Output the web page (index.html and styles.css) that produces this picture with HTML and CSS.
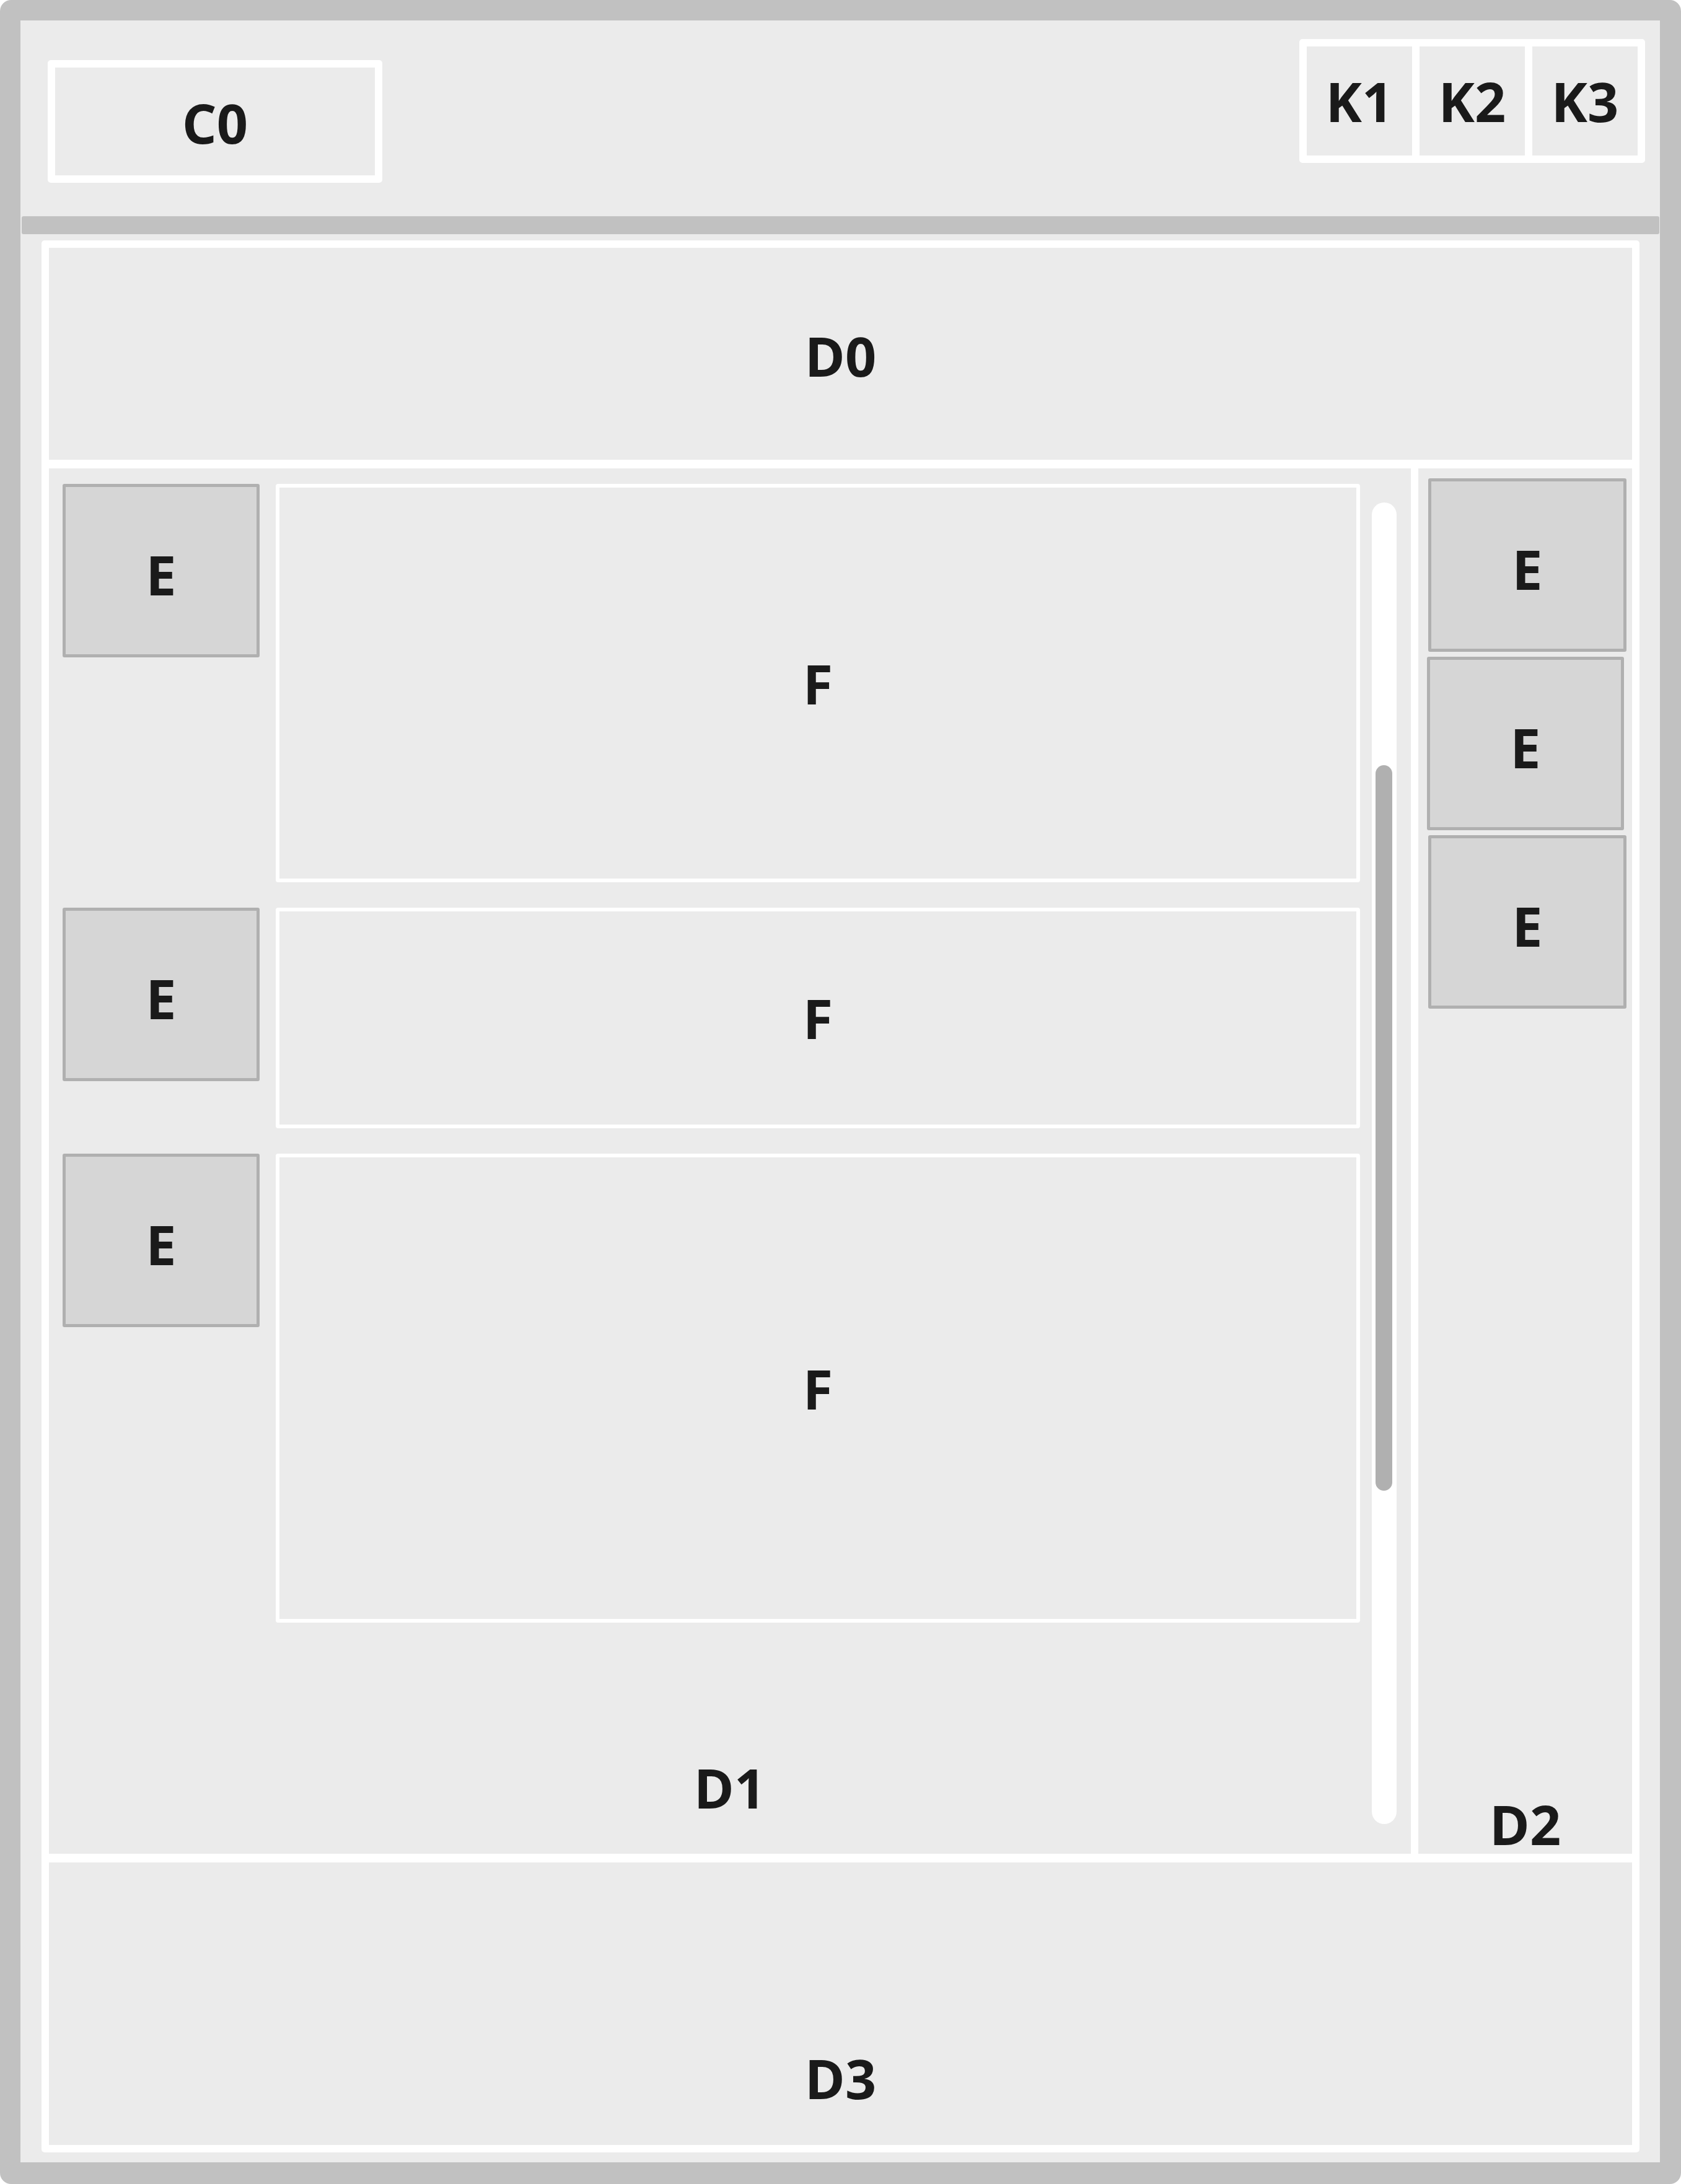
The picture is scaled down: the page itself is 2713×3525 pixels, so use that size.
FILE: index.html
```html
<!DOCTYPE html>
<html lang="en">
<head>
    <meta charset="UTF-8">
    <meta name="viewport" content="width=device-width, initial-scale=1.0">
    <title>Layout</title>
    <link rel="stylesheet" href="styles.css">
</head>
<body>

    <div class="ventana">
        <div class="cabecera">
            <div class="caja-c">C0</div>
            <div class="grupo-k">
                <div class="celda-k">K1</div>
                <div class="celda-k">K2</div>
                <div class="celda-k">K3</div>
            </div>
        </div>

        <div class="barra"></div>

        <div class="marco">
            <div class="panel panel-d0"><span class="etiqueta">D0</span></div>

            <div class="panel panel-d1">
                <div class="filas">
                    <div class="fila">
                        <div class="caja-e"><span class="etiqueta">E</span></div>
                        <div class="caja-f f-alta"><span class="etiqueta">F</span></div>
                    </div>
                    <div class="fila">
                        <div class="caja-e"><span class="etiqueta">E</span></div>
                        <div class="caja-f f-baja"><span class="etiqueta">F</span></div>
                    </div>
                    <div class="fila">
                        <div class="caja-e"><span class="etiqueta">E</span></div>
                        <div class="caja-f f-larga"><span class="etiqueta">F</span></div>
                    </div>
                </div>
                <div class="scroll">
                    <div class="scroll-thumb"></div>
                </div>
                <div class="etiqueta etiqueta-d1">D1</div>
            </div>

            <div class="panel panel-d2">
                <div class="caja-e lateral"><span class="etiqueta">E</span></div>
                <div class="caja-e lateral corrida"><span class="etiqueta">E</span></div>
                <div class="caja-e lateral"><span class="etiqueta">E</span></div>
                <div class="etiqueta etiqueta-abajo">D2</div>
            </div>

            <div class="panel panel-d3">
                <div class="etiqueta etiqueta-abajo">D3</div>
            </div>
        </div>
    </div>

</body>
</html>
```

FILE: styles.css
```css
body {
    margin: 0;
    padding: 0;
    background-color: #ffffff;
    font-family: "Open Sans", "Noto Sans", Arial, sans-serif;
}
.ventana {
    width: 2713px;
    height: 3525px;
    box-sizing: border-box;
    border-style: solid;
    border-color: #c1c1c1;
    border-width: 33px 34px 35px 33px;
    border-radius: 18px;
    background-color: #ebebeb;
    display: flex;
    flex-direction: column;
}
.etiqueta {
    font-size: 88px;
    font-weight: 700;
    line-height: 88px;
    color: #1a1a1a;
}
.cabecera {
    height: 316px;
    display: flex;
    justify-content: space-between;
    align-items: flex-start;
    padding: 0 24px 0 44px;
    box-sizing: border-box;
}
.caja-c {
    margin-top: 64px;
    width: 540px;
    height: 198px;
    box-sizing: border-box;
    border: 12px solid #ffffff;
    border-radius: 5px;
    display: flex;
    justify-content: center;
    align-items: center;
    padding-top: 4px;
    font-size: 88px;
    font-weight: 700;
    line-height: 88px;
    color: #1a1a1a;
}
.grupo-k {
    margin-top: 30px;
    display: flex;
    gap: 12px;
    background-color: #ffffff;
    border: 12px solid #ffffff;
    border-radius: 5px;
}
.celda-k {
    width: 170px;
    height: 176px;
    background-color: #ebebeb;
    display: flex;
    justify-content: center;
    align-items: center;
    font-size: 88px;
    font-weight: 700;
    line-height: 88px;
    color: #1a1a1a;
}
.barra {
    height: 29px;
    margin: 0 1px 10px 2px;
    background-color: #c1c1c1;
    border-radius: 3px;
}
.marco {
    margin: 0 33px 0 34px;
    padding: 12px;
    background-color: #ffffff;
    border-radius: 5px;
    display: grid;
    grid-template-columns: 1fr 345px;
    grid-template-rows: 342px 2236px 456px;
    gap: 14px 12px;
}
.panel {
    background-color: #ebebeb;
    box-sizing: border-box;
}
.panel-d0 {
    grid-column: 1 / 3;
    display: flex;
    justify-content: center;
    align-items: center;
    padding-top: 6px;
}
.panel-d1 {
    display: grid;
    grid-template-columns: 1fr 40px;
    grid-template-rows: 1fr auto;
    column-gap: 19px;
    padding: 25px 23px 48px 22px;
}
.filas {
    grid-column: 1;
    grid-row: 1;
    display: flex;
    flex-direction: column;
    gap: 41px;
}
.fila {
    display: flex;
    align-items: flex-start;
    gap: 26px;
}
.caja-e {
    width: 318px;
    height: 280px;
    flex-shrink: 0;
    box-sizing: border-box;
    background-color: #d6d6d6;
    border: 5px solid #b0b0b0;
    border-radius: 3px;
    display: flex;
    justify-content: center;
    align-items: center;
    padding-top: 12px;
}
.caja-f {
    flex: 1;
    box-sizing: border-box;
    border: 6px solid #ffffff;
    border-radius: 4px;
    display: flex;
    justify-content: center;
    align-items: center;
}
.f-alta {
    height: 643px;
}
.f-baja {
    height: 356px;
}
.f-larga {
    height: 757px;
}
.scroll {
    grid-column: 2;
    grid-row: 1 / 3;
    margin-top: 30px;
    background-color: #ffffff;
    border-radius: 20px;
    z-index: 0;
}
.scroll-thumb {
    width: 27px;
    height: 1171px;
    margin: 424px 0 0 6px;
    background-color: #b0b0b0;
    border-radius: 14px;
}
.etiqueta-d1 {
    grid-column: 1 / 3;
    grid-row: 2;
    text-align: center;
    padding-bottom: 15px;
    position: relative;
    z-index: 1;
}
.panel-d2 {
    display: flex;
    flex-direction: column;
    gap: 8px;
    padding: 16px 0 4px 0;
}
.lateral {
    width: 320px;
    margin-left: 16px;
}
.corrida {
    width: 318px;
    margin-left: 14px;
}
.etiqueta-abajo {
    margin-top: auto;
    text-align: center;
}
.panel-d3 {
    grid-column: 1 / 3;
    display: flex;
    flex-direction: column;
    padding-bottom: 64px;
}
```
